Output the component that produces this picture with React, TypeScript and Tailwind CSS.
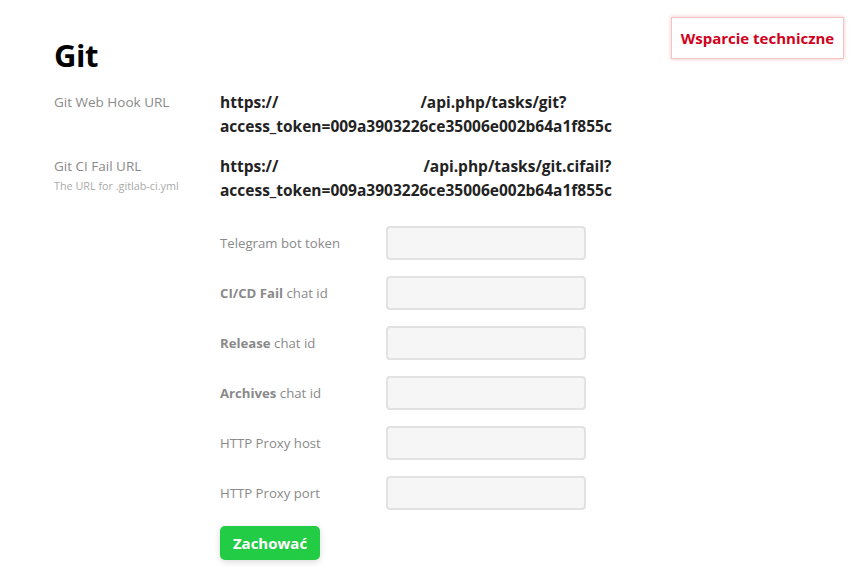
import React from "react";

const font = { fontFamily: '"Open Sans", "Noto Sans", sans-serif' };

function Field({ label }: { label: React.ReactNode }) {
  return (
    <div className="flex items-center h-[34px] mb-[16px]">
      <div className="w-[166px] text-[13.2px] text-[#8a8a8a] pt-[2px]">{label}</div>
      <div className="w-[200px] h-[34px] rounded-[4px] border-2 border-[#e2e2e2] bg-[#f6f6f6]" />
    </div>
  );
}

export default function App() {
  return (
    <div style={font} className="relative w-[862px] h-[588px] bg-white overflow-hidden">
      <div className="absolute left-[671px] top-[17px] w-[173px] h-[42px] flex items-center justify-center bg-white border border-[#f3c4c4] shadow-[0_0_4px_rgba(220,80,80,0.35)]">
        <span className="text-[15px] font-bold text-[#d0021b]">Wsparcie techniczne</span>
      </div>
      <div className="pl-[54px] pt-[34px]">
        <h1 className="text-[31px] font-bold text-black leading-[42px] tracking-[-0.5px]">Git</h1>
        <div className="mt-[14px] flex">
          <div className="w-[166px] text-[13.5px] text-[#8a8a8a] leading-[24px]">Git Web Hook URL</div>
          <div className="text-[15.5px] font-bold text-[#222] leading-[24px]">
            <div>
              https://<span className="inline-block w-[142px]" />/api.php/tasks/git?
            </div>
            <div>access_token=009a3903226ce35006e002b64a1f855c</div>
          </div>
        </div>
        <div className="mt-[16px] flex">
          <div className="w-[166px]">
            <div className="text-[13.5px] text-[#8a8a8a] leading-[24px]">Git CI Fail URL</div>
            <div className="text-[10.8px] text-[#aaaaaa] leading-[14px] mt-[1px]">The URL for .gitlab-ci.yml</div>
          </div>
          <div className="text-[15.5px] font-bold text-[#222] leading-[24px]">
            <div>
              https://<span className="inline-block w-[145px]" />/api.php/tasks/git.cifail?
            </div>
            <div>access_token=009a3903226ce35006e002b64a1f855c</div>
          </div>
        </div>
        <div className="ml-[166px] mt-[24px]">
          <Field label="Telegram bot token" />
          <Field label={<><b className="font-bold">CI/CD Fail</b> chat id</>} />
          <Field label={<><b className="font-bold">Release</b> chat id</>} />
          <Field label={<><b className="font-bold">Archives</b> chat id</>} />
          <Field label="HTTP Proxy host" />
          <Field label="HTTP Proxy port" />
          <button className="w-[100px] h-[34px] rounded-[5px] bg-[#22cc44] text-white text-[15px] font-bold shadow-[0_2px_6px_rgba(0,0,0,0.15)]">
            Zachować
          </button>
        </div>
      </div>
    </div>
  );
}
